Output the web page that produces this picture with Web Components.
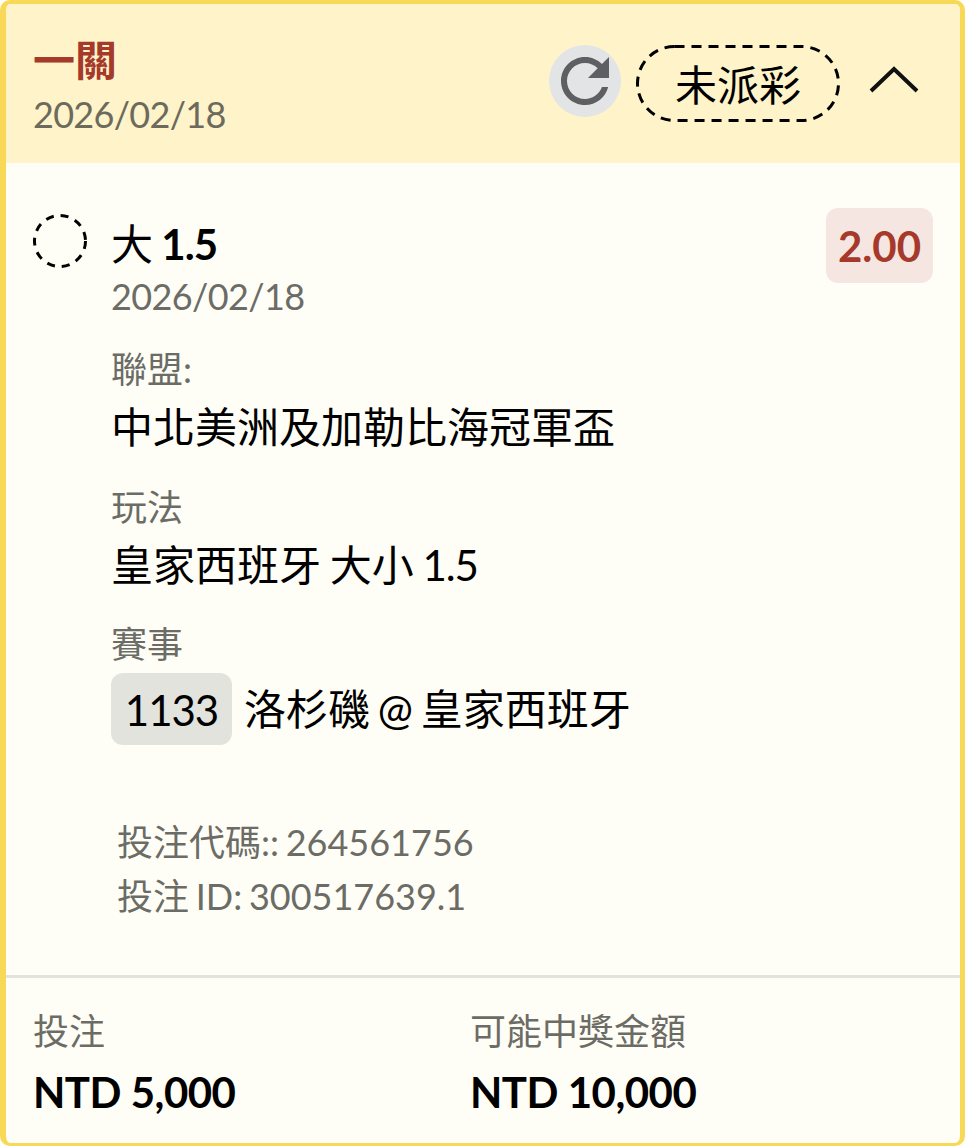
<!DOCTYPE html>
<html lang="zh-Hant"><head><meta charset="utf-8">
<style>
html,body{margin:0;padding:0;background:#fffef6}
body{font-family:Lato,"Noto Sans CJK TC",sans-serif}
</style></head><body>
<bet-card></bet-card>
<script>
class BetHeader extends HTMLElement{constructor(){super();this.attachShadow({mode:'open'}).innerHTML=`<style>
:host{display:flex;align-items:flex-start;height:159px;box-sizing:border-box;background:#fef3c9;padding:33px 40px 0 27px}
.l{flex:1;min-width:0;margin-top:-2px}
.t{font-size:42px;line-height:50px;font-weight:700;color:#a5392a}
.d{font-size:36px;line-height:44px;color:#6c6a5c;margin-top:7px;letter-spacing:-.7px}
.r{width:72px;height:72px;border-radius:50%;background:#e2e4e6;margin:8px 15px 0 0}
.p{position:relative;width:204px;height:77px;box-sizing:border-box;padding-bottom:3px;margin-top:8px;display:flex;align-items:center;justify-content:center;font-size:42px;color:#000}
.p svg{position:absolute;inset:0}
.c{margin:25px 0 0 28px;width:52px;height:36px}
svg{display:block}
</style><div class="l"><div class="t">一關</div><div class="d">2026/02/18</div></div>
<div class="r"><svg width="72" height="72" viewBox="0 0 24 24"><path fill="#5e5f62" d="M17.65 6.35C16.2 4.9 14.21 4 12 4c-4.42 0-7.99 3.58-7.99 8s3.57 8 7.99 8c3.73 0 6.84-2.55 7.73-6h-2.08c-.82 2.33-3.04 4-5.65 4-3.31 0-6-2.69-6-6s2.69-6 6-6c1.66 0 3.14.69 4.22 1.78L13 11h7V4l-2.35 2.35z"/></svg></div>
<div class="p"><svg width="204" height="77" viewBox="0 0 204 77"><rect x="1.5" y="1.5" width="201" height="74" rx="37" fill="none" stroke="#000" stroke-width="3" stroke-dasharray="10 7"/></svg>未派彩</div>
<svg class="c" viewBox="0 0 52 36"><path d="M3 29L26 7L49 29" fill="none" stroke="#111" stroke-width="4"/></svg>`}}
customElements.define('bet-header',BetHeader);
class BetField extends HTMLElement{constructor(){super();this.attachShadow({mode:'open'}).innerHTML=`<style>
:host{display:block;margin-top:var(--gap,0)}
.k{font-size:36px;line-height:44px;color:#6c6c66}
.v{font-size:42px;line-height:50px;color:#000;margin-top:var(--vgap,11px);display:flex;align-items:center;white-space:pre}
</style><div class="k"><slot name="k"></slot></div><div class="v"><slot></slot></div>`}}
customElements.define('bet-field',BetField);
class BetTag extends HTMLElement{constructor(){super();this.attachShadow({mode:'open'}).innerHTML=`<style>
:host{display:inline-flex;align-items:center;justify-content:center;height:72px;width:121px;background:#e3e3de;border-radius:12px;font-size:42px;color:#000;margin-right:12px;letter-spacing:-1px;padding-top:2px;box-sizing:border-box}
</style><slot></slot>`}}
customElements.define('bet-tag',BetTag);
class BetCard extends HTMLElement{constructor(){super();this.attachShadow({mode:'open'}).innerHTML=`<style>
:host{display:block;width:965px;height:1146px;box-sizing:border-box;border:solid #f8d957;border-width:4px 5px 3px 6px;border-radius:10px;background:#fffef6;overflow:hidden;font-family:Lato,"Noto Sans CJK TC",sans-serif}
main{height:815px;box-sizing:border-box;border-bottom:3px solid #e3e3de;padding:45px 27px 0 27px;display:flex;flex-direction:column}
.top{display:flex;align-items:flex-start}
.ring{width:54px;height:54px;margin-top:6px;flex:none}
.body{flex:1;margin-left:24px}
.sel{font-size:42px;line-height:50px;font-weight:700;color:#000;margin-top:11px;word-spacing:-2px}
.sel b{font-weight:400}
.dt{font-size:36px;line-height:44px;color:#6c6c66;margin:5px 0 29px;letter-spacing:-.6px}
.odds{width:107px;height:75px;border-radius:12px;background:#f5e6e2;color:#a5392a;font-size:42px;font-weight:700;display:flex;align-items:center;justify-content:center;flex:none}
.ids{padding:0 0 0 84px;margin-top:70px;font-size:36px;line-height:54px;color:#6c6c66;word-spacing:-2.5px}
.s3{letter-spacing:-1.2px}.s4{letter-spacing:-.9px}
.w{word-spacing:-2px}.w3{word-spacing:-3px}
footer{display:grid;grid-template-columns:437px 1fr;padding:31px 28px 0 27px}
.fk{font-size:36px;line-height:44px;color:#6c6c66}
.fv{font-size:42px;line-height:50px;font-weight:700;color:#000;margin-top:14px;letter-spacing:-.5px}
</style><bet-header></bet-header>
<main><div class="top"><svg class="ring" viewBox="0 0 54 54"><circle cx="27" cy="27" r="25.5" fill="none" stroke="#000" stroke-width="3" stroke-dasharray="8 7"/></svg>
<div class="body"><div class="sel"><b>大</b> <span class="s4">1.5</span></div><div class="dt">2026/02/18</div>
<bet-field><span slot="k">聯盟:</span>中北美洲及加勒比海冠軍盃</bet-field>
<bet-field style="--gap:33px"><span slot="k">玩法</span><span class="w">皇家西班牙 大小 <span class="s3">1.5</span></span></bet-field>
<bet-field style="--gap:32px;--vgap:7px"><span slot="k">賽事</span><bet-tag>1133</bet-tag><span class="w3">洛杉磯 @ 皇家西班牙</span></bet-field></div>
<div class="odds">2.00</div></div>
<div class="ids"><div>投注代碼:: <span>264561756</span></div><div>投注 <span>ID: 300517639.1</span></div></div></main>
<footer><div><div class="fk">投注</div><div class="fv">NTD 5,000</div></div><div><div class="fk">可能中獎金額</div><div class="fv">NTD 10,000</div></div></footer>`}}
customElements.define('bet-card',BetCard);
</script></body></html>
